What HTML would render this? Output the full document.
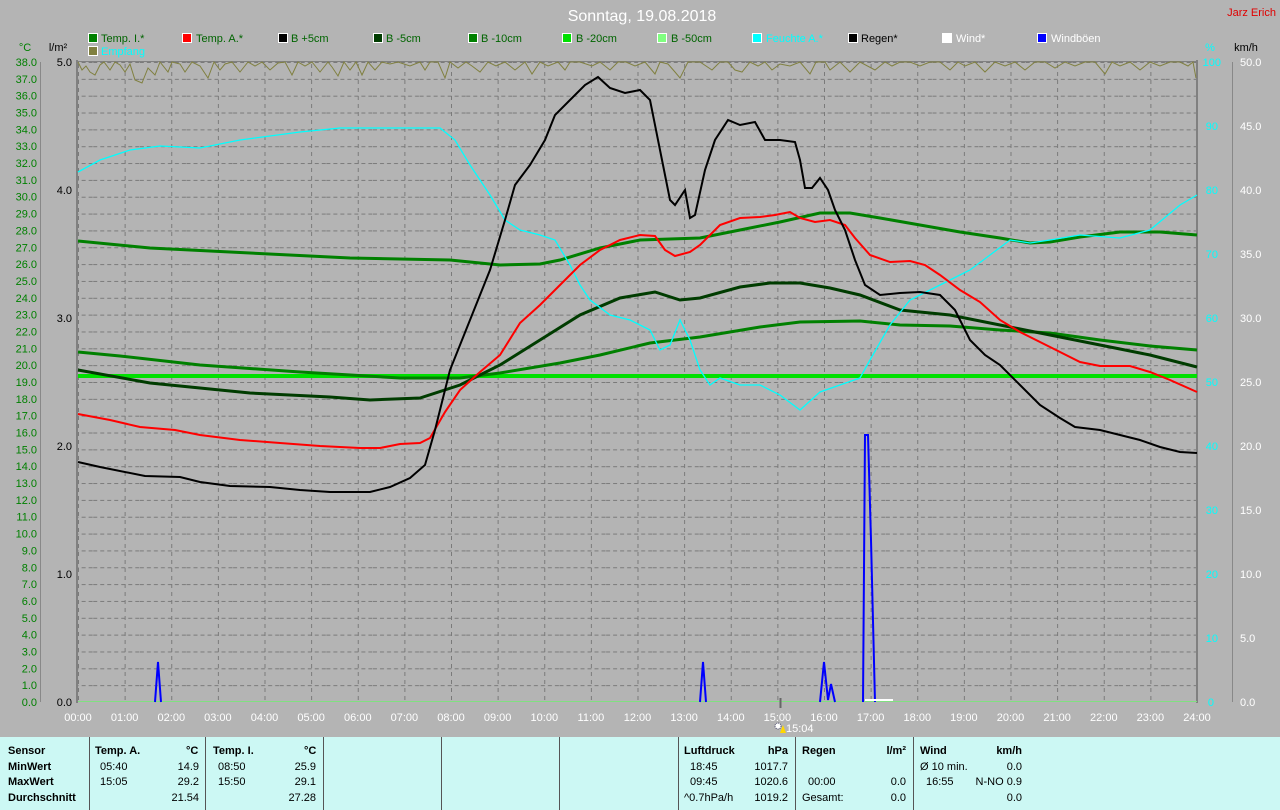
<!DOCTYPE html>
<html><head><meta charset="utf-8"><style>
html,body{margin:0;padding:0;background:#b4b4b4;width:1280px;height:810px;overflow:hidden;font-family:"Liberation Sans",sans-serif}
svg{position:absolute;left:0;top:0}
.tb{position:absolute;left:0;top:737px;width:1280px;height:73px;background:#ccf8f4;font-size:11px;color:#000}
.tb div{position:absolute;white-space:nowrap}
.b{font-weight:bold}
.sep{position:absolute;top:0;width:1px;height:73px;background:#555}
</style></head><body>
<svg width="1280" height="737" viewBox="0 0 1280 737" font-family="Liberation Sans, sans-serif" font-size="11">
<defs>
<pattern id="hg" x="0" y="62" width="46.625" height="16.842" patternUnits="userSpaceOnUse">
<line x1="0" y1="0.5" x2="46.625" y2="0.5" stroke="#7a7a7a" stroke-dasharray="4,3"/>
</pattern>
<pattern id="vg" x="78" y="0" width="46.625" height="8" patternUnits="userSpaceOnUse">
<line x1="0.5" y1="0" x2="0.5" y2="4" stroke="#7a7a7a"/>
</pattern>
</defs>
<text x="642" y="21" fill="#fff" font-size="16" text-anchor="middle">Sonntag, 19.08.2018</text>
<text x="1276" y="16" fill="#e00000" font-size="11" text-anchor="end">Jarz Erich</text>
<!-- legend -->
<g font-size="11">
<rect x="88.5" y="33.5" width="9" height="9" fill="#008000" stroke="#fff"/><text x="101" y="42" fill="#006400">Temp. I.*</text>
<rect x="182.5" y="33.5" width="9" height="9" fill="#ff0000" stroke="#fff"/><text x="196" y="42" fill="#006400">Temp. A.*</text>
<rect x="278.5" y="33.5" width="9" height="9" fill="#000" stroke="#fff"/><text x="291" y="42" fill="#006400">B +5cm</text>
<rect x="373.5" y="33.5" width="9" height="9" fill="#003c00" stroke="#fff"/><text x="386" y="42" fill="#006400">B -5cm</text>
<rect x="468.5" y="33.5" width="9" height="9" fill="#008000" stroke="#fff"/><text x="481" y="42" fill="#006400">B -10cm</text>
<rect x="562.5" y="33.5" width="9" height="9" fill="#00e000" stroke="#fff"/><text x="576" y="42" fill="#006400">B -20cm</text>
<rect x="657.5" y="33.5" width="9" height="9" fill="#80ff80" stroke="#fff"/><text x="671" y="42" fill="#006400">B -50cm</text>
<rect x="752.5" y="33.5" width="9" height="9" fill="#00ffff" stroke="#fff"/><text x="766" y="42" fill="#00ffff">Feuchte A.*</text>
<rect x="848.5" y="33.5" width="9" height="9" fill="#000" stroke="#fff"/><text x="861" y="42" fill="#000">Regen*</text>
<rect x="942.5" y="33.5" width="9" height="9" fill="#fff" stroke="#fff"/><text x="956" y="42" fill="#fff">Wind*</text>
<rect x="1037.5" y="33.5" width="9" height="9" fill="#0000ff" stroke="#fff"/><text x="1051" y="42" fill="#fff">Windböen</text>
<rect x="88.5" y="46.5" width="9" height="9" fill="#808040" stroke="#fff"/><text x="101" y="55" fill="#00ffff">Empfang</text>
</g>
<text x="25" y="51" fill="#008000" text-anchor="middle">°C</text>
<text x="58" y="51" fill="#000" text-anchor="middle">l/m²</text>
<text x="1210" y="51" fill="#00ffff" text-anchor="middle">%</text>
<text x="1246" y="51" fill="#000" text-anchor="middle">km/h</text>
<!-- grid -->
<rect x="78" y="62" width="1119" height="640" fill="url(#hg)"/>
<rect x="78" y="62" width="1119" height="640" fill="url(#vg)"/>
<line x1="40.5" y1="62" x2="40.5" y2="702" stroke="#888"/>
<line x1="1232.5" y1="62" x2="1232.5" y2="702" stroke="#888"/>
<line x1="77" y1="60" x2="77" y2="703" stroke="#808080" stroke-width="2"/>
<line x1="1197" y1="60" x2="1197" y2="703" stroke="#808080" stroke-width="2"/>
<line x1="78" y1="61.5" x2="1197" y2="61.5" stroke="#808080"/>
<g id="la" fill="#008000" text-anchor="end" font-size="11"></g>
<g fill="#000" text-anchor="end">
<text x="72" y="66">5.0</text><text x="72" y="194">4.0</text><text x="72" y="322">3.0</text><text x="72" y="450">2.0</text><text x="72" y="578">1.0</text><text x="72" y="706">0.0</text>
</g>
<g fill="#00ffff" text-anchor="end">
<text x="1221" y="66">100</text><text x="1218" y="130">90</text><text x="1218" y="194">80</text><text x="1218" y="258">70</text><text x="1218" y="322">60</text><text x="1218" y="386">50</text><text x="1218" y="450">40</text><text x="1218" y="514">30</text><text x="1218" y="578">20</text><text x="1218" y="642">10</text><text x="1214" y="706">0</text>
</g>
<g fill="#fff" text-anchor="start">
<text x="1240" y="66">50.0</text><text x="1240" y="130">45.0</text><text x="1240" y="194">40.0</text><text x="1240" y="258">35.0</text><text x="1240" y="322">30.0</text><text x="1240" y="386">25.0</text><text x="1240" y="450">20.0</text><text x="1240" y="514">15.0</text><text x="1240" y="578">10.0</text><text x="1240" y="642">5.0</text><text x="1240" y="706">0.0</text>
</g>
<g fill="#fff" text-anchor="middle" id="tl"></g>
<!-- empfang -->
<polyline fill="none" stroke="#808040" points="78,62 82,70 86,66 90,72 95,75 100,65 104,62 110,70 115,62 120,65 125,72 130,64 135,80 142,83 148,68 155,75 160,62 168,72 172,62 180,64 185,72 192,62 200,66 208,78 214,62 220,70 225,64 232,62 240,72 248,62 255,66 262,62 270,70 278,63 285,62 292,75 298,62 305,66 312,62 320,72 328,62 332,67 338,76 344,62 350,70 356,62 362,75 368,62 375,70 382,62 390,64 398,62 410,66 420,62 425,70 430,62 438,62 445,78 450,62 458,68 466,62 472,66 480,72 488,62 496,66 505,62 515,70 525,62 532,74 540,62 548,66 558,62 565,70 570,62 580,62 592,66 600,62 610,70 618,62 626,62 635,66 645,62 655,74 660,62 668,64 675,72 680,78 688,62 700,62 712,70 720,62 728,62 735,70 742,72 750,62 758,66 765,62 772,70 780,64 790,66 800,62 810,74 816,62 825,62 830,70 840,62 850,72 860,62 875,70 885,62 892,66 900,62 910,62 920,66 930,62 940,62 950,70 958,62 965,66 975,62 985,72 995,62 1005,66 1015,62 1025,70 1035,62 1045,62 1055,68 1065,62 1075,66 1085,62 1095,62 1105,74 1112,62 1120,66 1130,62 1140,70 1150,62 1160,66 1170,62 1180,62 1188,66 1193,62 1196,78"/>
<!-- bright green -->
<line x1="78" y1="376" x2="1197" y2="376" stroke="#00e000" stroke-width="4"/>
<!-- B -10 -->
<polyline fill="none" stroke="#008000" stroke-width="3" points="78,241 150,248 250,253 350,258 450,260 500,265 540,264 560,260 600,248 640,240 700,238 740,230 780,222 820,213 850,213 880,218 920,225 960,232 1000,238 1030,243 1050,242 1080,237 1120,232 1160,232 1197,235"/>
<!-- B -20 middle -->
<polyline fill="none" stroke="#008000" stroke-width="3" points="78,352 120,356 200,365 300,372 400,378 460,378 500,373 560,363 600,355 650,343 700,337 760,327 800,322 860,321 900,325 950,326 1000,330 1050,333 1100,340 1150,346 1197,350"/>
<!-- B -5 -->
<polyline fill="none" stroke="#003c00" stroke-width="3" points="78,370 150,383 250,393 330,397 370,400 420,398 460,385 500,365 540,340 580,315 620,298 655,292 680,300 700,298 740,287 770,283 800,283 830,288 860,295 900,310 950,315 1000,325 1050,335 1100,345 1150,355 1197,367"/>
<!-- humidity -->
<polyline fill="none" stroke="#00ffff" stroke-width="1.3" points="78,172 100,160 130,150 160,146 200,148 240,140 300,132 340,128 400,128 440,128 455,140 470,165 490,195 505,220 520,230 540,235 555,240 570,265 580,285 590,300 610,315 630,320 650,330 660,350 670,345 680,320 690,340 700,370 710,385 720,378 740,385 760,385 780,395 800,410 820,392 840,385 860,378 870,360 890,325 910,300 930,290 950,280 970,270 990,255 1010,240 1030,243 1050,240 1080,235 1120,238 1150,230 1180,205 1197,195"/>
<!-- red -->
<polyline fill="none" stroke="#ff0000" stroke-width="2" points="78,414 110,420 140,427 175,430 200,435 240,440 280,443 320,446 360,448 380,448 400,444 420,443 430,438 445,412 460,390 480,372 500,355 520,323 540,305 560,285 580,265 600,250 620,240 640,235 655,236 665,250 675,256 690,252 700,245 720,225 740,218 760,217 775,215 790,212 800,218 815,222 830,220 845,225 855,238 870,255 890,262 910,261 925,265 940,275 960,290 980,302 1000,320 1020,332 1040,342 1060,352 1080,362 1100,366 1130,366 1150,372 1170,380 1197,392"/>
<!-- black -->
<polyline fill="none" stroke="#000" stroke-width="2" points="78,462 100,467 145,476 180,477 200,482 230,486 270,487 300,490 330,492 370,492 390,487 410,478 425,465 435,430 450,370 470,320 490,270 505,220 515,185 530,165 545,140 555,115 570,100 585,85 598,77 610,88 625,93 640,90 650,100 660,150 670,200 675,205 685,190 690,218 695,215 705,170 715,140 728,120 740,125 755,122 765,140 780,140 795,142 800,160 805,188 812,188 820,178 828,190 835,210 845,230 855,260 865,285 880,295 900,293 920,292 940,295 955,310 970,340 985,355 1000,365 1020,385 1040,405 1060,418 1075,427 1100,430 1120,435 1140,440 1160,447 1180,452 1197,453"/>
<!-- wind -->
<line x1="78" y1="701.5" x2="1197" y2="701.5" stroke="#80e080"/>
<g fill="none" stroke="#0000ff" stroke-width="2">
<polyline points="155,702 158,662 161,702"/>
<polyline points="700,702 703,662 706,702"/>
<polyline points="820,702 824,662 828,700 831,684 835,702"/>
<polyline points="863,702 865,435 868,435 871,540 875,702"/>
</g>
<line x1="865" y1="700" x2="893" y2="700" stroke="#fff" stroke-width="2"/>
<line x1="780.5" y1="698" x2="780.5" y2="708" stroke="#666" stroke-width="2"/>
<circle cx="778" cy="726" r="3" fill="#fff" stroke="#446" stroke-dasharray="1,1"/>
<polygon points="780,733 783,725 786,733" fill="#ffd800"/>
<text x="786" y="732" fill="#fff">15:04</text>
</svg>
<div class="tb">
<div class="sep" style="left:89px"></div><div class="sep" style="left:205px"></div><div class="sep" style="left:323px"></div><div class="sep" style="left:441px"></div><div class="sep" style="left:559px"></div><div class="sep" style="left:678px"></div><div class="sep" style="left:795px"></div><div class="sep" style="left:913px"></div>
<div class="b" style="left:8px;top:8px">Sensor</div><div class="b" style="left:8px;top:24px">MinWert</div><div class="b" style="left:8px;top:39px">MaxWert</div><div class="b" style="left:8px;top:55px">Durchschnitt</div>
<div class="b" style="left:95px;top:8px">Temp. A.</div><div class="b" style="left:186px;top:8px">°C</div>
<div style="left:100px;top:24px">05:40</div><div style="right:1081px;top:24px">14.9</div>
<div style="left:100px;top:39px">15:05</div><div style="right:1081px;top:39px">29.2</div>
<div style="right:1081px;top:55px">21.54</div>
<div class="b" style="left:213px;top:8px">Temp. I.</div><div class="b" style="left:304px;top:8px">°C</div>
<div style="left:218px;top:24px">08:50</div><div style="right:964px;top:24px">25.9</div>
<div style="left:218px;top:39px">15:50</div><div style="right:964px;top:39px">29.1</div>
<div style="right:964px;top:55px">27.28</div>
<div class="b" style="left:684px;top:8px">Luftdruck</div><div class="b" style="right:492px;top:8px">hPa</div>
<div style="left:690px;top:24px">18:45</div><div style="right:492px;top:24px">1017.7</div>
<div style="left:690px;top:39px">09:45</div><div style="right:492px;top:39px">1020.6</div>
<div style="left:684px;top:55px">^0.7hPa/h</div><div style="right:492px;top:55px">1019.2</div>
<div class="b" style="left:802px;top:8px">Regen</div><div class="b" style="right:374px;top:8px">l/m²</div>
<div style="left:808px;top:39px">00:00</div><div style="right:374px;top:39px">0.0</div>
<div style="left:802px;top:55px">Gesamt:</div><div style="right:374px;top:55px">0.0</div>
<div class="b" style="left:920px;top:8px">Wind</div><div class="b" style="right:258px;top:8px">km/h</div>
<div style="left:920px;top:24px">Ø 10 min.</div><div style="right:258px;top:24px">0.0</div>
<div style="left:926px;top:39px">16:55</div><div style="right:258px;top:39px">N-NO 0.9</div>
<div style="right:258px;top:55px">0.0</div>
</div>
<script>
var la=document.getElementById('la'),s='';
for(var i=0;i<=38;i++){var y=702-i*640/38+4;s+='<text x="37" y="'+y.toFixed(1)+'">'+i.toFixed(1)+'</text>';}
la.innerHTML=s;
var tl=document.getElementById('tl');s='';
for(var h=0;h<=24;h++){var x=78+h*1119/24;s+='<text x="'+x.toFixed(1)+'" y="721">'+(h<10?'0':'')+h+':00</text>';}
tl.innerHTML=s;
</script>
</body></html>
